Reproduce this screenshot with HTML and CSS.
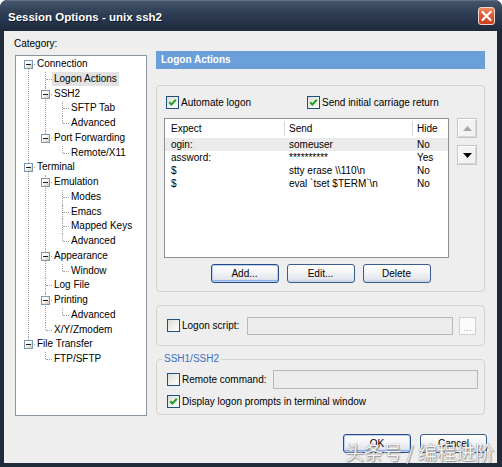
FILE: index.html
```html
<!DOCTYPE html>
<html>
<head>
<meta charset="utf-8">
<title>Session Options - unix ssh2</title>
<link rel="stylesheet" href="styles.css">
</head>
<body>
<div class="window">
  <div class="titlebar">
    <span class="title">Session Options - unix ssh2</span>
    <span class="close"><svg width="17" height="18" viewBox="0 0 17 18"><path d="M4.5 5 L12.5 13 M12.5 5 L4.5 13" stroke="#fff" stroke-width="2.2" stroke-linecap="round"/></svg></span>
  </div>
  <div class="client">
    <div class="main">
      <div class="left">
        <div class="cat-label">Category:</div>
        <div class="tree">
          <ul class="tree-root">
            <li><span class="exp"></span><div class="row">Connection</div>
              <ul>
                <li><div class="row"><span class="sel">Logon Actions</span></div></li>
                <li><span class="exp"></span><div class="row">SSH2</div>
                  <ul>
                    <li><div class="row">SFTP Tab</div></li>
                    <li><div class="row">Advanced</div></li>
                  </ul>
                </li>
                <li><span class="exp"></span><div class="row">Port Forwarding</div>
                  <ul>
                    <li><div class="row">Remote/X11</div></li>
                  </ul>
                </li>
              </ul>
            </li>
            <li><span class="exp"></span><div class="row">Terminal</div>
              <ul>
                <li><span class="exp"></span><div class="row">Emulation</div>
                  <ul>
                    <li><div class="row">Modes</div></li>
                    <li><div class="row">Emacs</div></li>
                    <li><div class="row">Mapped Keys</div></li>
                    <li><div class="row">Advanced</div></li>
                  </ul>
                </li>
                <li><span class="exp"></span><div class="row">Appearance</div>
                  <ul>
                    <li><div class="row">Window</div></li>
                  </ul>
                </li>
                <li><div class="row">Log File</div></li>
                <li><span class="exp"></span><div class="row">Printing</div>
                  <ul>
                    <li><div class="row">Advanced</div></li>
                  </ul>
                </li>
                <li><div class="row">X/Y/Zmodem</div></li>
              </ul>
            </li>
            <li><span class="exp"></span><div class="row">File Transfer</div>
              <ul>
                <li><div class="row">FTP/SFTP</div></li>
              </ul>
            </li>
          </ul>
        </div>
      </div>

      <div class="right">
        <div class="panel-head">Logon Actions</div>

        <div class="group g1">
          <div class="cbrow">
            <label class="cb w141"><span class="box checked"><svg width="11" height="11" viewBox="0 0 11 11"><path d="M2.2 5.2 L4.4 7.6 L8.8 2.8" fill="none" stroke="#21a121" stroke-width="2"/></svg></span>Automate logon</label>
            <label class="cb"><span class="box checked"><svg width="11" height="11" viewBox="0 0 11 11"><path d="M2.2 5.2 L4.4 7.6 L8.8 2.8" fill="none" stroke="#21a121" stroke-width="2"/></svg></span>Send initial carriage return</label>
          </div>
          <div class="listarea">
            <div class="list">
              <div class="lrow lhead">
                <div class="c1">Expect</div><div class="c2">Send</div><div class="c3">Hide</div>
              </div>
              <div class="lrow hl"><div class="c1">ogin:</div><div class="c2">someuser</div><div class="c3">No</div></div>
              <div class="lrow"><div class="c1">assword:</div><div class="c2">**********</div><div class="c3">Yes</div></div>
              <div class="lrow"><div class="c1">$</div><div class="c2">stty erase \\110\n</div><div class="c3">No</div></div>
              <div class="lrow"><div class="c1">$</div><div class="c2">eval `tset $TERM`\n</div><div class="c3">No</div></div>
            </div>
            <div class="updown">
              <span class="abtn"><svg width="9" height="5" viewBox="0 0 9 5"><path d="M0 5 L4.5 0 L9 5 Z" fill="#a7a7a7"/></svg></span>
              <span class="abtn"><svg width="9" height="5" viewBox="0 0 9 5"><path d="M0 0 L9 0 L4.5 5 Z" fill="#000"/></svg></span>
            </div>
          </div>
          <div class="btnrow">
            <button class="btn default">Add...</button>
            <button class="btn">Edit...</button>
            <button class="btn">Delete</button>
          </div>
        </div>

        <div class="group g2">
          <label class="cb"><span class="box"></span>Logon script:</label>
          <span class="field f-script"></span>
          <span class="dots">...</span>
        </div>

        <fieldset class="g3">
          <legend>SSH1/SSH2</legend>
          <div class="g3row">
            <label class="cb"><span class="box"></span>Remote command:</label>
            <span class="field f-remote"></span>
          </div>
          <div class="g3row2">
            <label class="cb"><span class="box checked"><svg width="11" height="11" viewBox="0 0 11 11"><path d="M2.2 5.2 L4.4 7.6 L8.8 2.8" fill="none" stroke="#21a121" stroke-width="2"/></svg></span>Display logon prompts in terminal window</label>
          </div>
        </fieldset>
      </div>
    </div>

    <div class="bottom">
      <button class="btn default ok">OK</button>
      <button class="btn cancel">Cancel</button>
    </div>
  </div>
  <div class="watermark">头条号 / 编程进阶</div>
</div>
</body>
</html>
```

FILE: styles.css
```css
html, body {
  margin: 0;
  padding: 0;
  background: #ffffff;
}

.window {
  position: relative;
  width: 502px;
  height: 467px;
  background: #1f2a3b;
  border-radius: 7px 7px 0 0;
  display: flex;
  flex-direction: column;
  overflow: hidden;
}

.titlebar {
  height: 31px;
  flex: 0 0 31px;
  display: flex;
  align-items: center;
  padding: 0 8px 0 8px;
  box-sizing: border-box;
  background: linear-gradient(#7a889c 0, #46566d 1px, #34445b 30%, #26334a 70%, #1f2a3b 100%);
  border-radius: 7px 7px 0 0;
}

.title {
  color: #ffffff;
  font: bold 11.5px "Liberation Sans", Arial, sans-serif;
  padding-top: 3px;
  text-shadow: 1px 1px 0 #111a26;
}

.close {
  margin-left: auto;
  margin-right: -1px;
  margin-top: 1px;
  width: 17px;
  height: 18px;
  box-sizing: border-box;
  border: 1px solid #f3d6cc;
  border-radius: 3px;
  background: linear-gradient(#f08a62, #e05a32 45%, #c93e1a);
  display: flex;
}

.close svg {
  margin: -1px;
}

.client {
  flex: 1;
  margin: 0 5px 4px 4px;
  background: #eeeeee;
  padding: 6px 13px 10px 10px;
  display: flex;
  flex-direction: column;
  font: 10px "Liberation Sans", Arial, sans-serif;
  color: #000;
}

.main {
  display: flex;
  gap: 9px;
}

.left {
  width: 133px;
  flex: 0 0 133px;
}

.cat-label {
  line-height: 13px;
  height: 13px;
}

.tree {
  margin-top: 5px;
  margin-left: 1px;
  width: 132px;
  height: 361px;
  box-sizing: border-box;
  border: 1px solid #8c96a0;
  background: #ffffff;
  padding-top: 1px;
  overflow: hidden;
}

.tree ul {
  list-style: none;
  margin: 0;
  padding: 0;
}

.tree ul ul {
  margin-left: -4px;
}

.tree li {
  position: relative;
  padding-left: 21px;
}

.tree li::before {
  content: "";
  position: absolute;
  left: 12px;
  top: 0;
  bottom: 0;
  border-left: 1px dotted #a0a0a0;
}

.tree li:last-child::before {
  bottom: auto;
  height: 7px;
}

.tree-root > li:first-child::before {
  top: 7px;
}

.tree li::after {
  content: "";
  position: absolute;
  left: 13px;
  top: 7px;
  width: 6px;
  border-top: 1px dotted #a0a0a0;
}

.tree .row {
  height: 14.75px;
  line-height: 14.75px;
  white-space: nowrap;
}

.tree .exp {
  position: absolute;
  left: 8px;
  top: 3px;
  width: 9px;
  height: 9px;
  box-sizing: border-box;
  border: 1px solid #7b98b3;
  background: linear-gradient(135deg, #ffffff 35%, #c9c8bc);
  z-index: 1;
}

.tree .exp::before {
  content: "";
  position: absolute;
  left: 1px;
  top: 3px;
  width: 5px;
  height: 1px;
  background: #1b1b1b;
}

.tree .sel {
  display: inline-block;
  background: #e2e2e2;
  line-height: 14px;
  padding: 0 2px;
  margin-left: -2px;
}

.right {
  flex: 1;
  margin-top: 14px;
  display: flex;
  flex-direction: column;
}

.panel-head {
  height: 18px;
  line-height: 18px;
  background: #6b9fd9;
  color: #ffffff;
  font-weight: bold;
  padding-left: 5px;
}

.group {
  border: 1px solid #d3d3ce;
  border-radius: 4px;
  box-sizing: border-box;
}

.g1 {
  margin-top: 16px;
  padding: 10px 7px 8px 7px;
}

.cbrow {
  display: flex;
  height: 13px;
  padding-left: 2px;
}

.cb {
  display: flex;
  align-items: center;
  gap: 2px;
  line-height: 13px;
  white-space: nowrap;
}

.w141 {
  width: 141px;
}

.box {
  width: 13px;
  height: 13px;
  box-sizing: border-box;
  border: 1px solid #1c5180;
  background: linear-gradient(135deg, #dcdcd7, #fbfbf9 85%);
  display: flex;
  align-items: center;
  justify-content: center;
}

.listarea {
  margin-top: 9px;
  display: flex;
  gap: 8px;
}

.list {
  width: 285px;
  height: 140px;
  box-sizing: border-box;
  border: 1px solid #8e9094;
  background: #ffffff;
}

.lrow {
  display: grid;
  grid-template-columns: 120px 128px 1fr;
  height: 13px;
  line-height: 13px;
  white-space: nowrap;
}

.lrow .c1 {
  padding-left: 6px;
}

.lrow .c2,
.lrow .c3 {
  padding-left: 4px;
}

.lhead {
  height: 19px;
  padding: 2px 0 2px 0;
  box-sizing: border-box;
  line-height: 15px;
}

.lhead .c1,
.lhead .c2 {
  border-right: 1px solid #d8d8d8;
}

.hl {
  background: #ebebeb;
}

.updown {
  display: flex;
  flex-direction: column;
  gap: 7px;
}

.abtn {
  width: 20px;
  height: 20px;
  box-sizing: border-box;
  border: 1px solid #c6c6c6;
  background: #f3f3f3;
  box-shadow: inset 1px 1px 0 #ffffff, inset -1px -1px 0 #d6d6d6;
  display: flex;
  align-items: center;
  justify-content: center;
}

.btnrow {
  margin-top: 6px;
  display: flex;
  justify-content: center;
  gap: 8px;
}

.btn {
  width: 68px;
  height: 19px;
  box-sizing: border-box;
  border: 1px solid #3b5c8e;
  border-radius: 3px;
  background: linear-gradient(#ffffff, #f6f6f8 35%, #e4e7ee 80%, #c9cfdd);
  font: 10px "Liberation Sans", Arial, sans-serif;
  color: #000;
  padding: 0;
  line-height: 17px;
}

.btn.default {
  border-color: #264b84;
  box-shadow: inset 0 0 0 1px #b9d0f2, inset 0 -1px 0 1px #8fb0e4;
}

.g2 {
  margin-top: 13px;
  height: 41px;
  display: flex;
  align-items: center;
  padding: 0 8px 0 10px;
}

.field {
  display: block;
  box-sizing: border-box;
  border: 1px solid #b8b8b8;
  background: #ececec;
}

.f-script {
  width: 206px;
  height: 18px;
  margin-left: auto;
}

.dots {
  width: 17px;
  height: 18px;
  margin-left: 6px;
  box-sizing: border-box;
  border: 1px solid #d0d0d0;
  background: #fbfbfb;
  color: #b0b0b0;
  text-align: center;
  line-height: 20px;
}

.g3 {
  margin: 7px 0 0 0;
  padding: 5px 6px 6px 10px;
  border: 1px solid #d3d3ce;
  border-radius: 4px;
  min-width: 0;
}

.g3 legend {
  padding: 0 2px;
  margin-left: -5px;
  color: #3c6fc6;
  line-height: 12px;
  font-size: 10px;
}

.g3row {
  display: flex;
  align-items: center;
  height: 19px;
}

.f-remote {
  width: 205px;
  height: 19px;
  margin-left: auto;
}

.g3row2 {
  margin-top: 6px;
  height: 13px;
  display: flex;
}

.bottom {
  margin-top: auto;
  margin-right: -3px;
  display: flex;
  justify-content: flex-end;
  gap: 9px;
}

.btn.cancel {
  width: 67px;
}

.watermark {
  position: absolute;
  left: 345px;
  top: 438px;
  font: 19px "Noto Sans CJK SC", sans-serif;
  color: #f4f4f4;
  white-space: nowrap;
  text-shadow: 0 0 1px #6a6a6a, 1px 1px 1px rgba(0, 0, 0, 0.35);
}
```
